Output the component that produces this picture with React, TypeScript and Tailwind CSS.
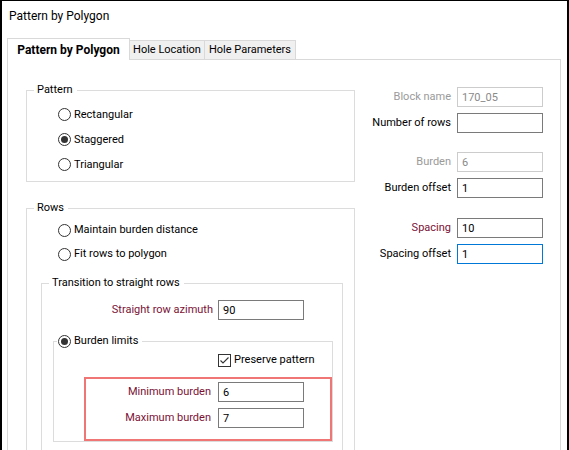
import clsx from 'clsx';

// ---------------------------------------------------------------------------
// Small Windows-style controls
// ---------------------------------------------------------------------------

const MAROON = 'text-[#7a1236]';

function Radio({ checked }: { checked?: boolean }) {
  return (
    <span className="flex size-[13px] shrink-0 items-center justify-center rounded-full border border-[#333] bg-white">
      {checked && <span className="size-[7px] rounded-full bg-[#333]" />}
    </span>
  );
}

function Checkbox({ checked }: { checked?: boolean }) {
  return (
    <span className="flex size-[13px] shrink-0 items-center justify-center border border-[#333] bg-white">
      {checked && (
        <svg width="11" height="11" viewBox="0 0 11 11" fill="none">
          <path d="M1.5 5.5 L4 8 L9.5 2.5" stroke="#333" strokeWidth="1.1" />
        </svg>
      )}
    </span>
  );
}

interface FieldProps {
  value?: string;
  disabled?: boolean;
  focused?: boolean;
}

function Field({ value = '', disabled, focused }: FieldProps) {
  return (
    <input
      readOnly
      value={value}
      className={clsx(
        'h-[20px] w-[86px] shrink-0 border bg-white px-[4px] text-[11px] outline-none',
        disabled && 'border-[#cccccc] text-[#8a8a8a]',
        !disabled && focused && 'border-[#0078d7] text-black',
        !disabled && !focused && 'border-[#7a7a7a] text-black',
      )}
    />
  );
}

function RadioRow({ label, checked, h = 'h-[25px]' }: { label: string; checked?: boolean; h?: string }) {
  return (
    <div className={clsx('flex items-center gap-[3px]', h)}>
      <Radio checked={checked} />
      <span>{label}</span>
    </div>
  );
}

function RightRow({ label, tone, field, className }: { label: string; tone: string; field: FieldProps; className?: string }) {
  return (
    <div className={clsx('flex h-[20px] items-center justify-end gap-[6px]', className)}>
      <span className={tone}>{label}</span>
      <Field {...field} />
    </div>
  );
}

// ---------------------------------------------------------------------------
// Dialog
// ---------------------------------------------------------------------------

export default function App() {
  return (
    <div className="h-[450px] w-[569px] overflow-hidden border-t border-r-2 border-l-2 border-black bg-white font-[Roboto,sans-serif] text-[11px] leading-[16px] text-black">
      {/* Title */}
      <div className="h-[37px] pt-[7px] pl-[7px] text-[12px]">Pattern by Polygon</div>

      {/* Tabs */}
      <div className="ml-[5px] flex items-end">
        <div className="relative z-10 -mb-px flex h-[22px] w-[123px] items-center justify-center border border-b-0 border-[#d9d9d9] bg-white text-[12px] font-bold">
          Pattern by Polygon
        </div>
        <div className="flex h-[19px] w-[75px] items-center justify-center border border-b-0 border-l-0 border-[#d9d9d9] bg-[#f0f0f0]">
          Hole Location
        </div>
        <div className="flex h-[19px] w-[91px] items-center justify-center border border-b-0 border-l-0 border-[#d9d9d9] bg-[#f0f0f0]">
          Hole Parameters
        </div>
      </div>

      {/* Tab panel */}
      <div className="ml-[5px] flex h-[420px] w-[554px] border border-[#d9d9d9]">
        {/* Left column */}
        <div className="ml-[18px] w-[329px] shrink-0 pt-[22px]">
          {/* Pattern */}
          <fieldset className="border border-[#dcdcdc] pb-[4px]">
            <legend className="ml-[7px] pr-[4px] pl-[3px]">Pattern</legend>
            <div className="flex flex-col pt-[4px] pl-[31px]">
              <RadioRow label="Rectangular" />
              <RadioRow label="Staggered" checked />
              <RadioRow label="Triangular" />
            </div>
          </fieldset>

          {/* Rows */}
          <fieldset className="mt-[18px] border border-[#dcdcdc] pb-[10px]">
            <legend className="ml-[7px] pr-[4px] pl-[3px]">Rows</legend>
            <div className="flex flex-col pt-[2px] pl-[31px]">
              <RadioRow label="Maintain burden distance" h="h-[24px]" />
              <RadioRow label="Fit rows to polygon" h="h-[24px]" />
            </div>

            {/* Transition to straight rows */}
            <fieldset className="mt-[9px] mr-[11px] ml-[14px] border border-[#dcdcdc] pb-[10px]">
              <legend className="ml-[7px] pr-[4px] pl-[3px]">Transition to straight rows</legend>
              <div className="mt-[9px] flex h-[20px] items-center gap-[5px]">
                <span className={clsx('w-[171px] text-right', MAROON)}>Straight row azimuth</span>
                <Field value="90" />
              </div>

              {/* Burden limits */}
              <fieldset className="mt-[13px] ml-[11px] w-[278px] border border-[#dcdcdc]">
                <legend className="ml-[3px] pr-[4px] pl-[1px]">
                  <span className="flex items-center gap-[3px]">
                    <Radio checked />
                    Burden limits
                  </span>
                </legend>
                <div className="mt-[1px] flex h-[20px] items-center gap-[3px] pl-[164px]">
                  <Checkbox checked />
                  <span>Preserve pattern</span>
                </div>

                {/* Highlighted limits */}
                <div className="mt-[7px] ml-[30px] flex w-[248px] flex-col gap-[6px] border-2 border-[#f07575] pt-[3px] pb-[11px]">
                  <div className="flex h-[20px] items-center gap-[7px]">
                    <span className={clsx('w-[125px] text-right', MAROON)}>Minimum burden</span>
                    <Field value="6" />
                  </div>
                  <div className="flex h-[20px] items-center gap-[7px]">
                    <span className={clsx('w-[125px] text-right', MAROON)}>Maximum burden</span>
                    <Field value="7" />
                  </div>
                </div>
              </fieldset>
            </fieldset>
          </fieldset>
        </div>

        {/* Right column */}
        <div className="flex flex-1 flex-col pt-[27px] pr-[17px]">
          <RightRow label="Block name" tone="text-[#9a9a9a]" field={{ value: '170_05', disabled: true }} />
          <RightRow label="Number of rows" tone="text-black" field={{}} className="mt-[6px]" />
          <RightRow label="Burden" tone="text-[#9a9a9a]" field={{ value: '6', disabled: true }} className="mt-[19px]" />
          <RightRow label="Burden offset" tone="text-black" field={{ value: '1' }} className="mt-[6px]" />
          <RightRow label="Spacing" tone={MAROON} field={{ value: '10' }} className="mt-[20px]" />
          <RightRow label="Spacing offset" tone="text-black" field={{ value: '1', focused: true }} className="mt-[6px]" />
        </div>
      </div>
    </div>
  );
}
